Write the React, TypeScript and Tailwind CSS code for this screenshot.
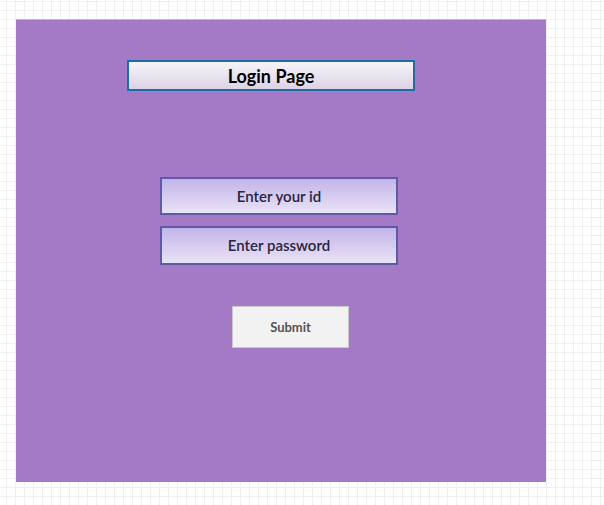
const font = { fontFamily: "Lato, 'Noto Sans', sans-serif" };

function Field({ label, tall }: { label: string; tall?: boolean }) {
  return (
    <div
      className={`flex w-[238px] items-center justify-center border-2 border-[#5f5aa8] bg-gradient-to-b from-[#c3b4e8] to-[#e9e3f6] text-[15px] font-semibold text-[#2a2440] ${tall ? "h-[39px]" : "h-[38px]"}`}
    >
      {label}
    </div>
  );
}

export default function App() {
  return (
    <div
      style={font}
      className="h-[505px] w-[604px] bg-white bg-[linear-gradient(to_right,#efefef_1px,transparent_1px),linear-gradient(to_bottom,#efefef_1px,transparent_1px)] bg-[size:9px_9px] bg-[position:6px_1px] pl-[16px] pt-[19px]"
    >
      <div className="flex h-[463px] w-[530px] flex-col border-t border-[#c9a9e0] bg-[#a479c5]">
        <div className="ml-[111px] mt-[40px] flex h-[31px] w-[288px] items-center justify-center border-2 border-[#1d6fa3] bg-gradient-to-b from-[#f6f4f8] to-[#dcd3e6] pt-px text-[18px] font-bold text-black">
          Login Page
        </div>
        <div className="ml-[144px] mt-[86px] flex flex-col gap-[11px]">
          <Field label="Enter your id" />
          <Field label="Enter password" tall />
        </div>
        <button
          type="button"
          className="ml-[216px] mt-[41px] flex h-[42px] w-[117px] items-center justify-center border border-[#c8c8c8] bg-[#f2f2f2] pt-px text-[13px] font-bold text-[#555]"
        >
          Submit
        </button>
      </div>
    </div>
  );
}
